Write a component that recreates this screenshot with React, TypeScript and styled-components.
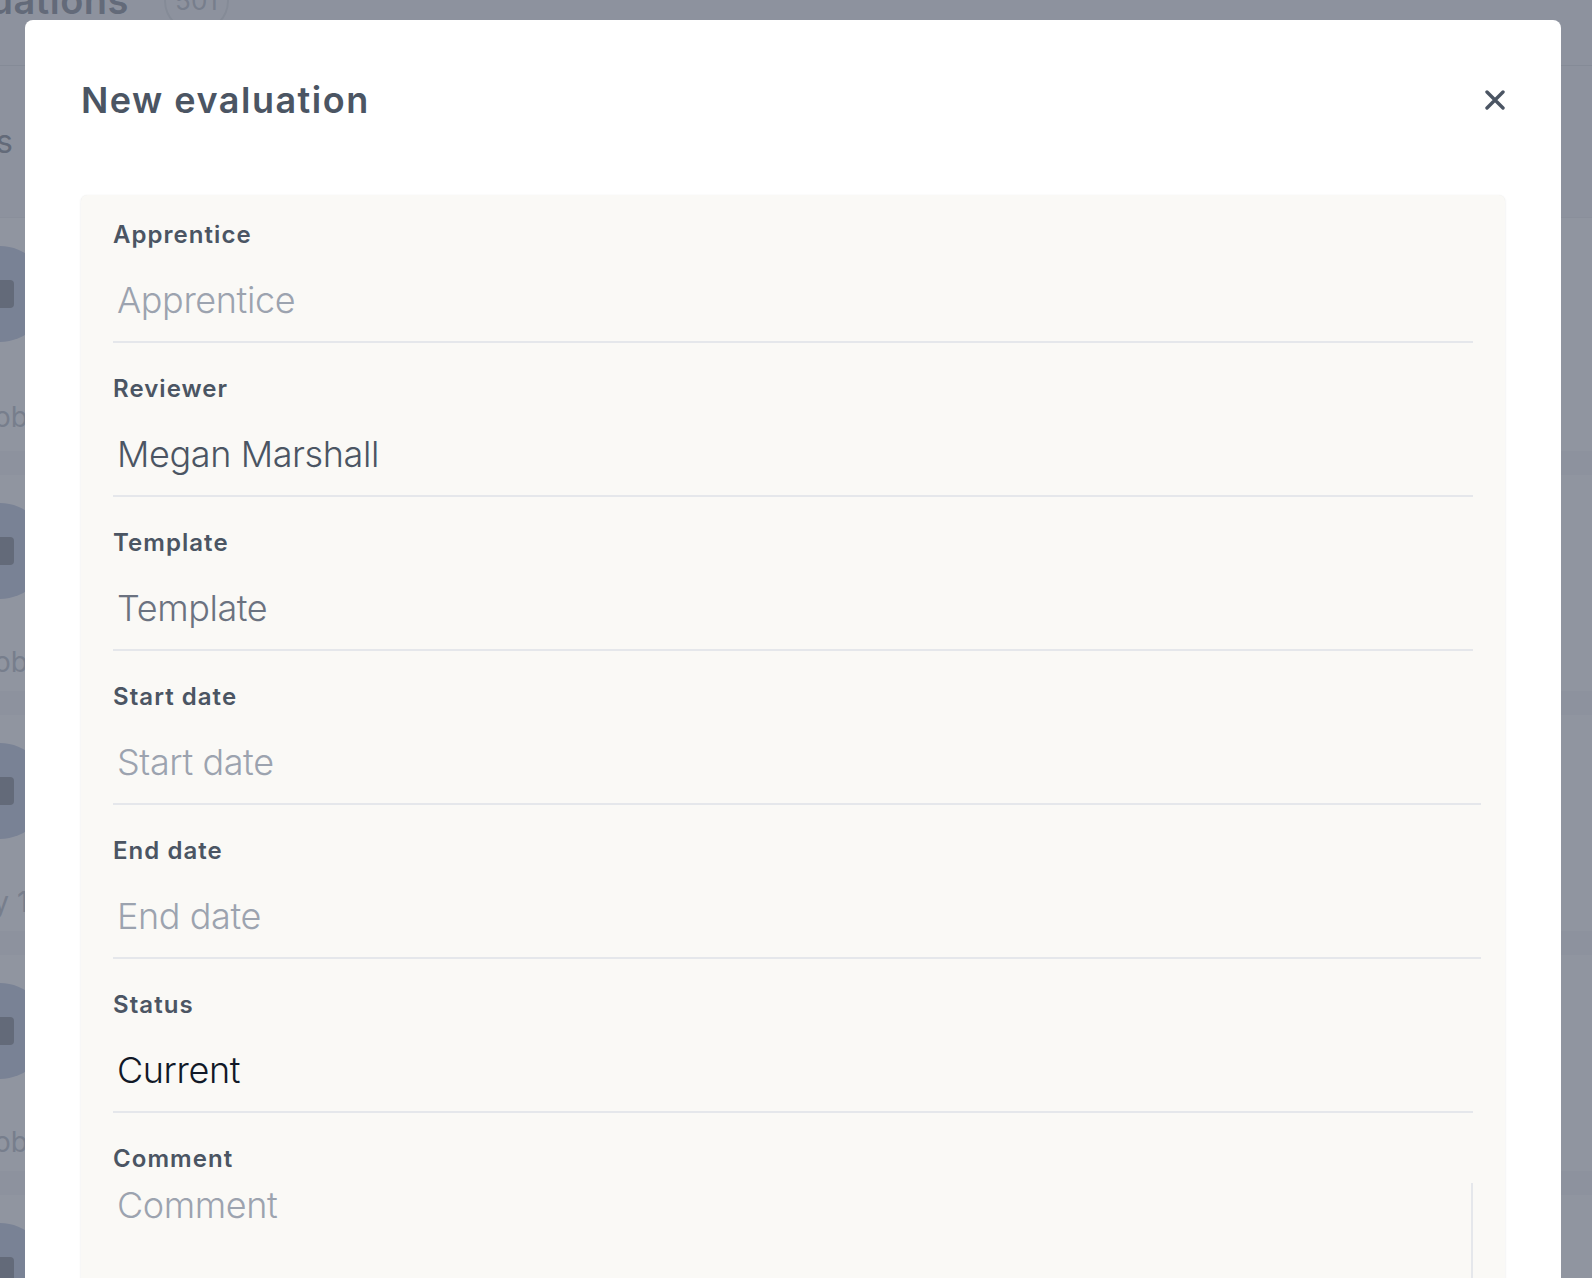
import styled, { createGlobalStyle } from "styled-components";

const GlobalStyle = createGlobalStyle`
	html, body {
		margin: 0;
		padding: 0;
		height: 100%;
		overflow: hidden;
		background: #f3f4f6;
		font-family: Inter, "Noto Sans", "DejaVu Sans", sans-serif;
	}
	* {
		box-sizing: border-box;
	}
`

// page behind the dialog (only a sliver shows at the edges)
const BgPage = styled.div`
	margin-left: -160px;
	width: 1800px;
`

const BgHeader = styled.header`
	display: flex;
	align-items: flex-start;
	gap: 35px;
	height: 66px;
	padding-left: 71px;
	border-bottom: 1px solid #d1d5db;
	overflow: hidden;
`

const BgTitle = styled.h1`
	margin: -20px 0 0;
	font-size: 38px;
	line-height: 40px;
	font-weight: 600;
	color: #4b5563;
	letter-spacing: 0.5px;
`

const BgBadge = styled.span`
	margin-top: -32px;
	width: 65px;
	height: 65px;
	border-radius: 50%;
	border: 2px solid #d1d5db;
	display: flex;
	align-items: center;
	justify-content: center;
	font-size: 26px;
	color: #9ca3af;
`

const BgTabs = styled.div`
	padding: 56px 0 0 0;
	height: 152px;
	font-size: 32px;
	color: #4b5563;
	border-bottom: 1px solid #e5e7eb;
`

const BgList = styled.ul`
	list-style: none;
	margin: 0;
	padding: 0;
	display: flex;
	flex-direction: column;
	gap: 24px;
`

const BgCard = styled.li<{ $first?: boolean }>`
	background: #ffffff;
	height: ${(p) => (p.$first ? "233px" : "216px")};
	padding: 28px 0 0 112px;
	display: flex;
	flex-direction: column;
	gap: ${(p) => (p.$first ? "58px" : "46px")};
`

const BgAvatar = styled.div`
	width: 96px;
	height: 96px;
	border-radius: 50%;
	background: #a5b4d4;
	display: flex;
	align-items: center;
	justify-content: center;

	span {
		width: 28px;
		height: 28px;
		border-radius: 4px;
		background: #4b5563;
	}
`

const BgMeta = styled.p`
	margin: 0 0 0 26px;
	font-size: 28px;
	color: #9ca3af;
`

// dialog
const Overlay = styled.div`
	position: fixed;
	inset: 0;
	background: rgba(107, 114, 128, 0.75);
	padding: 20px 31px 0 25px;
	overflow: hidden;
`

const Modal = styled.section`
	background: #ffffff;
	border-radius: 8px;
	padding: 56px 56px 40px;
	min-height: 1400px;
`

const ModalHeader = styled.div`
	display: flex;
	align-items: center;
	justify-content: space-between;
	margin-bottom: 71px;
`

const Title = styled.h2`
	margin: 0;
	font-size: 36px;
	line-height: 48px;
	font-weight: 600;
	color: #4b5563;
	letter-spacing: 1.5px;
`

const CloseButton = styled.button`
	border: 0;
	background: none;
	padding: 0;
	width: 20px;
	height: 20px;
	display: flex;
	color: #4b5563;
	cursor: pointer;
`

const FormCard = styled.form`
	background: #faf9f6;
	border-radius: 6px;
	box-shadow: 0 1px 3px rgba(0, 0, 0, 0.08), 0 0 1px rgba(0, 0, 0, 0.06);
	padding: 22px 32px 40px;
	display: flex;
	flex-direction: column;
	gap: 28px;
`

const Field = styled.div`
	display: flex;
	flex-direction: column;
`

const Label = styled.label`
	font-size: 24px;
	line-height: 36px;
	font-weight: 600;
	color: #4b5563;
	letter-spacing: 1.05px;
`

const tones = {
	muted: "#9ca3af",
	grey: "#6b7280",
	slate: "#4b5563",
	ink: "#111827",
}

const Input = styled.input<{ $tone: keyof typeof tones; $wide?: boolean }>`
	margin-top: 15px;
	height: 75px;
	width: ${(p) => (p.$wide ? "calc(100% + 8px)" : "100%")};
	padding: 8px 4px 17px;
	border: 0;
	border-bottom: 2px solid #e5e7eb;
	background: transparent;
	font-family: inherit;
	font-size: 36px;
	line-height: 48px;
	font-weight: 300;
	letter-spacing: -0.4px;
	color: ${(p) => tones[p.$tone]};
	outline: none;

	&::placeholder {
		color: ${(p) => tones[p.$tone]};
		opacity: 1;
	}
`

const CommentArea = styled.textarea`
	margin-top: 6px;
	height: 220px;
	width: 100%;
	padding: 0 4px;
	border: 0;
	border-right: 2px solid #e5e7eb;
	background: transparent;
	resize: none;
	font-family: inherit;
	font-size: 36px;
	line-height: normal;
	font-weight: 300;
	letter-spacing: -0.4px;
	color: #111827;
	outline: none;

	&::placeholder {
		color: #9ca3af;
		opacity: 1;
	}
`

type FieldDef = {
	id: string;
	label: string;
	placeholder?: string;
	value?: string;
	tone: keyof typeof tones;
	wide?: boolean;
}

const fields: FieldDef[] = [
	{ id: "apprentice", label: "Apprentice", placeholder: "Apprentice", tone: "muted" },
	{ id: "reviewer", label: "Reviewer", value: "Megan Marshall", tone: "slate" },
	{ id: "template", label: "Template", value: "Template", tone: "grey" },
	{ id: "start", label: "Start date", placeholder: "Start date", tone: "muted", wide: true },
	{ id: "end", label: "End date", placeholder: "End date", tone: "muted", wide: true },
	{ id: "status", label: "Status", value: "Current", tone: "ink" },
]

const bgRows = ["Job review", "Job review", "ay 1, 2024", "Job review", "Job review"]

export default function App() {
	return (
		<>
			<GlobalStyle />
			<BgPage aria-hidden>
				<BgHeader>
					<BgTitle>Evaluations</BgTitle>
					<BgBadge>501</BgBadge>
				</BgHeader>
				<BgTabs>Evaluations</BgTabs>
				<BgList>
					{bgRows.map((text, i) => (
						<BgCard key={i} $first={i === 0}>
							<BgAvatar><span /></BgAvatar>
							<BgMeta>{text}</BgMeta>
						</BgCard>
					))}
				</BgList>
			</BgPage>
			<Overlay>
				<Modal role="dialog" aria-labelledby="new-eval-title">
					<ModalHeader>
						<Title id="new-eval-title">New evaluation</Title>
						<CloseButton type="button" aria-label="Close">
							<svg width="20" height="20" viewBox="0 0 20 20" fill="none">
								<path d="M2 2L18 18M18 2L2 18" stroke="currentColor" strokeWidth="3.4" strokeLinecap="round" />
							</svg>
						</CloseButton>
					</ModalHeader>
					<FormCard onSubmit={(e) => e.preventDefault()}>
						{fields.map((f) => (
							<Field key={f.id}>
								<Label htmlFor={f.id}>{f.label}</Label>
								<Input
									id={f.id}
									name={f.id}
									$tone={f.tone}
									$wide={f.wide}
									placeholder={f.placeholder}
									defaultValue={f.value}
								/>
							</Field>
						))}
						<Field>
							<Label htmlFor="comment">Comment</Label>
							<CommentArea id="comment" name="comment" placeholder="Comment" />
						</Field>
					</FormCard>
				</Modal>
			</Overlay>
		</>
	)
}
